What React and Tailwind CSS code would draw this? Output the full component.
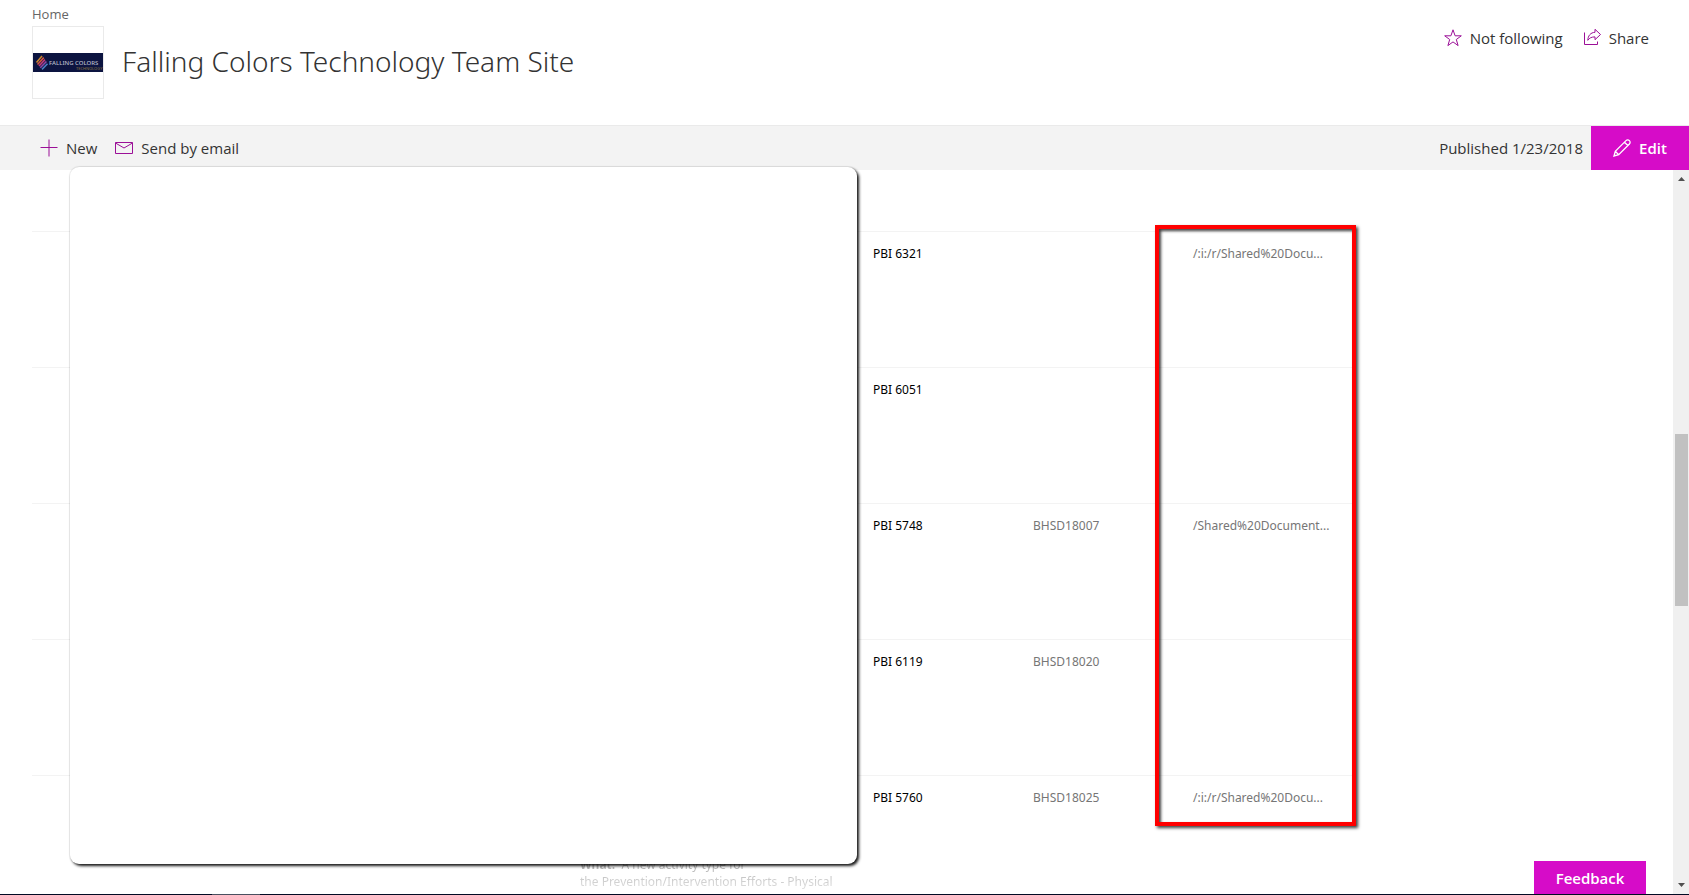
import React from "react";

const ROWS = [
  { pbi: "PBI 6321", code: "", link: "/:i:/r/Shared%20Docu..." },
  { pbi: "PBI 6051", code: "", link: "" },
  { pbi: "PBI 5748", code: "BHSD18007", link: "/Shared%20Document..." },
  { pbi: "PBI 6119", code: "BHSD18020", link: "" },
  { pbi: "PBI 5760", code: "BHSD18025", link: "/:i:/r/Shared%20Docu...", note: true },
];

const SiteLogo = () => (
  <svg viewBox="0 0 70 19" className="w-full" role="img" aria-label="Falling Colors Technology">
    <rect width="70" height="19" fill="#0c1440" />
    <g strokeWidth="1.6" fill="none">
      <path d="M3.5 9.5 L9 3" stroke="#c8862e" />
      <path d="M4.5 11.5 L10.8 4.6" stroke="#d4543f" />
      <path d="M6 13 L12 6.6" stroke="#c23a78" />
      <path d="M7.3 14.8 L13.4 8.5" stroke="#8d4aa8" />
      <path d="M9 16.4 L14.5 10.7" stroke="#4a7fc4" />
    </g>
    <text x="16" y="12.3" fontSize="6" fontWeight="500" fill="#b9bccb" fontFamily="Noto Sans, sans-serif">FALLING COLORS</text>
    <text x="43" y="16.5" fontSize="4" fill="#8a7440" fontFamily="Noto Sans, sans-serif">TECHNOLOGY</text>
  </svg>
);

const Icon = ({ children, className = "text-[#9b0f97]" }) => (
  <svg width="18" height="18" viewBox="0 0 18 18" fill="none" stroke="currentColor" strokeWidth="1" className={`shrink-0 ${className}`} aria-hidden="true">
    {children}
  </svg>
);

const Header = () => (
  <header className="flex h-[125px] shrink-0 items-start justify-between pl-8 pr-10">
    <div>
      <a href="#home" className="block pt-1 pb-0.5 text-[13px] leading-5 text-[#666666]">Home</a>
      <div className="flex items-center gap-[18px]">
        <a href="#site" className="flex h-[73px] w-[72px] items-center border border-[#eaeaea] bg-white">
          <SiteLogo />
        </a>
        <h1 className="pb-1 font-['Noto_Sans',sans-serif] text-[28px] font-light leading-9 text-[#333333]">Falling Colors Technology Team Site</h1>
      </div>
    </div>
    <div className="flex gap-5 pt-7 text-[15px] leading-5 text-[#333333]">
      <button type="button" className="flex items-center gap-2">
        <Icon>
          <path d="M9 0.8 L11.1 6.8 H17.3 L12.3 10.5 L14.1 16.6 L9 12.9 L3.9 16.6 L5.7 10.5 L0.7 6.8 H6.9 Z" />
        </Icon>
        Not following
      </button>
      <button type="button" className="flex items-center gap-2">
        <Icon>
          <path d="M1.5 3.5 V15.5 H14.5 V12.5" />
          <path d="M12 0.3 L17.5 5.5 L12 10.7 V7.9 C8.5 7.9 6.5 8.9 4.8 11.3 C5 6.8 7.5 3.5 12 3.3 Z" />
        </Icon>
        Share
      </button>
    </div>
  </header>
);

const CommandBar = () => (
  <div className="flex h-[45px] shrink-0 items-stretch justify-between border-t border-[#eaeaea] bg-[#f3f3f3] text-[15px] text-[#333333]">
    <div className="flex items-center gap-[18px] pl-10">
      <button type="button" className="flex items-center gap-2">
        <Icon>
          <path d="M9 0.5 V17.5 M0.5 8.5 H17.5" />
        </Icon>
        New
      </button>
      <button type="button" className="flex items-center gap-2">
        <Icon>
          <path d="M0.5 3.5 H17.5 V14.5 H0.5 Z M0.5 4 L9 9 L17.5 4" />
        </Icon>
        Send by email
      </button>
    </div>
    <div className="flex items-center gap-2">
      <span>Published 1/23/2018</span>
      <button type="button" className="flex h-full w-[98px] items-center justify-center gap-2 bg-[#d60cc8] font-semibold text-white">
        <Icon className="text-white">
          <path strokeWidth="1.3" d="M1 17 L2.3 12.3 L13 1.6 A2.3 2.3 0 0 1 16.4 5 L5.7 15.7 Z M11.5 3.2 L14.8 6.5 M2.3 12.3 L5.7 15.7" />
        </Icon>
        Edit
      </button>
    </div>
  </div>
);

const DocumentList = () => (
  <table className="w-[1321px] table-fixed border-collapse text-left font-['Noto_Sans',sans-serif] text-[12px] leading-[17px] text-[#767676]">
    <colgroup>
      <col className="w-[536px]" />
      <col className="w-[293px]" />
      <col className="w-[160px]" />
      <col className="w-[160px]" />
      <col className="w-[172px]" />
    </colgroup>
    <tbody className="align-top">
      {ROWS.map((row) => (
        <tr key={row.pbi} className="h-[136px] border-t border-[#f3f3f3]">
          <td />
          <td className="pl-3">
            {row.note && (
              <p className="bg-linear-to-b from-[#a0a0a0] from-70% to-[#e0e0e0] bg-clip-text pt-20 text-transparent">
                <b>What:</b>&nbsp; A new activity type for
                <br />
                the Prevention/Intervention Efforts - Physical
              </p>
            )}
          </td>
          <td className="pl-3 pt-[13px] text-black">{row.pbi}</td>
          <td className="pl-3 pt-[13px]">{row.code}</td>
          <td className="pl-3 pt-[13px]">{row.link}</td>
        </tr>
      ))}
    </tbody>
  </table>
);

const ScrollBar = () => (
  <div className="flex w-4 shrink-0 flex-col items-center bg-[#f0f0f0]">
    <svg viewBox="0 0 16 18" className="h-[18px] w-4" aria-hidden="true">
      <path d="M5 11 L8.5 7 L12 11 Z" fill="#505050" />
    </svg>
    <div className="flex w-full flex-1 flex-col items-center">
      <div className="flex-[246]" />
      <div className="w-[13px] flex-[172] bg-[#c1c1c1]" />
      <div className="flex-[270]" />
    </div>
    <svg viewBox="0 0 16 18" className="h-[18px] w-4" aria-hidden="true">
      <path d="M5 7 L8.5 11 L12 7 Z" fill="#505050" />
    </svg>
  </div>
);

export default function App() {
  return (
    <div className="flex h-screen flex-col overflow-hidden bg-white font-['Open_Sans',sans-serif]">
      <Header />
      <CommandBar />
      <div className="relative flex min-h-0 flex-1">
        <main className="min-w-0 flex-1 overflow-hidden pl-8 pt-[61px]">
          <DocumentList />
        </main>
        <ScrollBar />

        {/* blank cover over the left columns */}
        <div className="absolute -top-[3px] left-[70px] h-[697px] w-[787px] rounded-[9px] bg-white shadow-[0_0_1px_1px_rgba(0,0,0,0.08),2px_2px_3px_rgba(0,0,0,0.9)]" />

        {/* highlighted link column */}
        <div className="pointer-events-none absolute left-[1155px] top-[55px] h-[601px] w-[201px] border-4 border-[#ff0000] shadow-[2px_2px_3px_rgba(0,0,0,0.75),inset_2px_2px_3px_rgba(0,0,0,0.75)]" />

        <button type="button" className="absolute bottom-0 right-[43px] h-[33px] w-28 bg-[#d60cc8] pt-0.5 text-[15px] font-semibold text-white">
          Feedback
        </button>
      </div>
      <div className="h-px shrink-0 bg-[#020b24] pl-[212px]">
        <div className="h-px w-12 bg-[#4a5060]" />
      </div>
    </div>
  );
}
